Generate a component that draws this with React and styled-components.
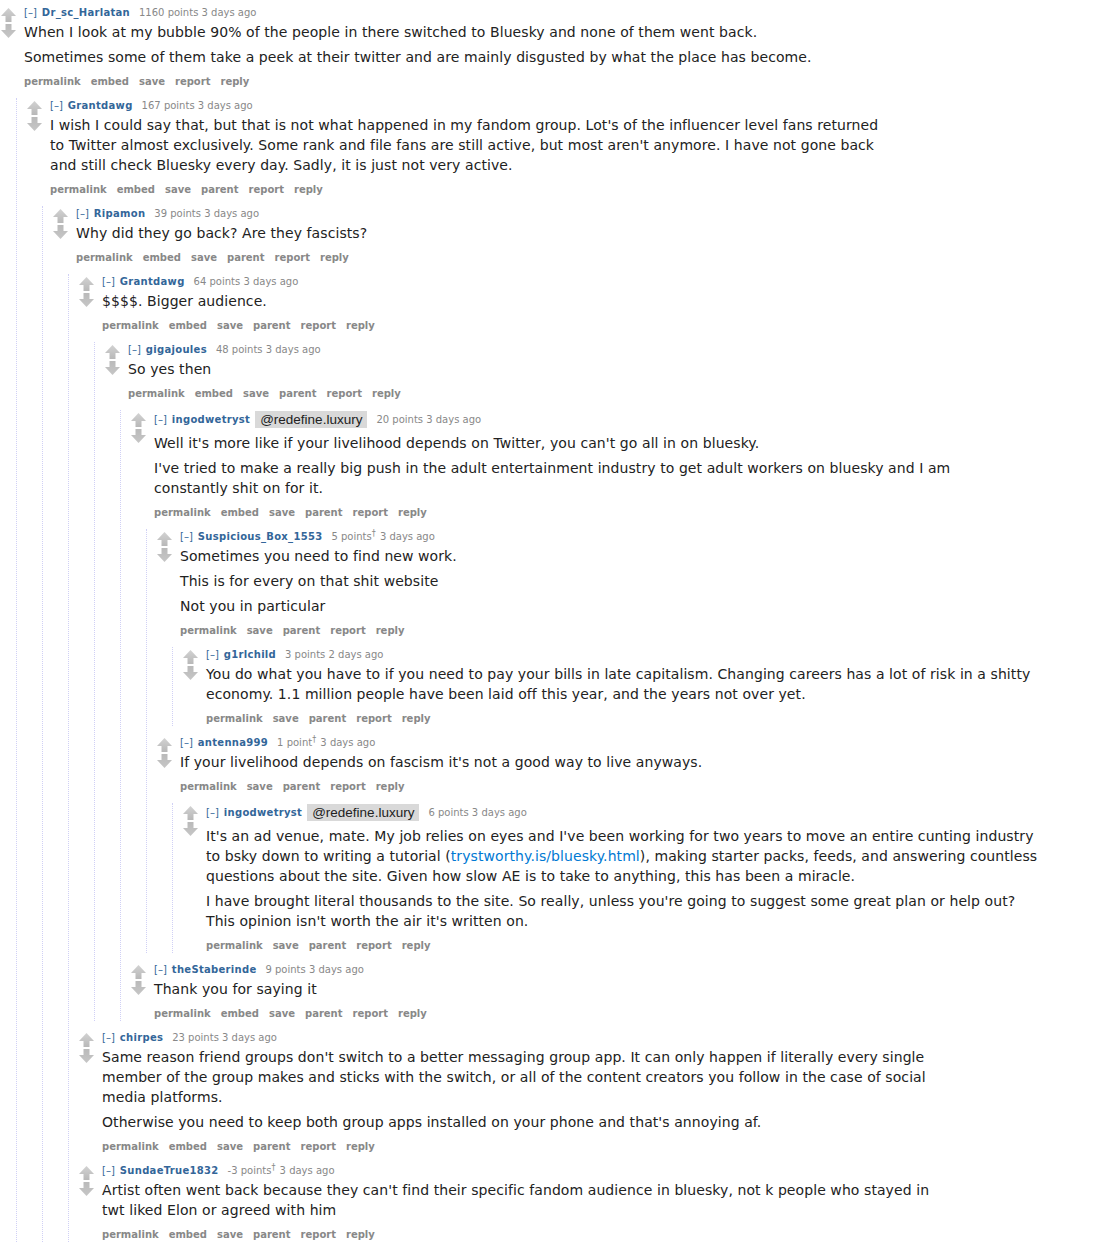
import React from "react";
import styled, { createGlobalStyle } from "styled-components";

const GlobalStyle = createGlobalStyle`
  html, body { margin: 0; padding: 0; background: #ffffff; }
  body { font-family: "DejaVu Sans", Verdana, sans-serif; color: #222222; }
`;

const Page = styled.div`
  padding: 5px 0 0 1px;
  width: 1110px;
  box-sizing: border-box;
`;

const CommentBox = styled.div`
  margin-top: ${(p) => (p.$root ? "0" : "9px")};
  margin-left: ${(p) => (p.$root ? "0" : "10px")};
`;

const Row = styled.div`
  display: flex;
  align-items: flex-start;
`;

const Midcol = styled.div`
  width: 15px;
  flex: 0 0 15px;
  margin-right: 8px;
  display: flex;
  flex-direction: column;
  gap: 2px;
  padding-top: 3px;
`;

const Entry = styled.div`
  flex: 1;
  min-width: 0;
`;

const Tagline = styled.div`
  display: flex;
  align-items: center;
  padding: 1px 0 ${(p) => (p.$flair ? "3px" : "0")} 0;
  font-size: 10px;
  line-height: 14px;
  color: #888888;
  white-space: nowrap;
`;

const Expand = styled.span`
  color: #336699;
  margin-right: 5px;
`;

const Author = styled.span`
  color: #336699;
  font-weight: bold;
  letter-spacing: 0.3px;
  margin-right: 9px;
`;

const Flair = styled.span`
  display: inline-block;
  font-family: "Liberation Sans", Arial, sans-serif;
  font-size: 13.5px;
  line-height: 17px;
  padding: 0 5px;
  margin: 0 9px 0 -4px;
  background: #d9d9d9;
  color: #222222;
`;

const Meta = styled.span`
  color: #888888;
`;

const Dagger = styled.sup`
  font-size: 8px;
  line-height: 0;
  vertical-align: super;
  margin-right: 1px;
`;

const Body = styled.div`
  margin-top: 2px;
  max-width: 840px;
  font-size: 14px;
  line-height: 20px;
  letter-spacing: 0.08px;
  color: #222222;
`;

const Para = styled.p`
  margin: 0 0 5px 0;
`;

const Link = styled.a`
  color: #0079d3;
  text-decoration: none;
`;

const Buttons = styled.ul`
  list-style: none;
  margin: 8px 0 0 0;
  padding: 0;
  display: flex;
  gap: 10px;
  font-size: 10px;
  line-height: 14px;
  font-weight: bold;
  color: #888888;
`;

const Children = styled.div`
  margin-left: 15px;
  border-left: 1px dotted #d0d0f5;
`;

function Arrow({ down }) {
  const id = down ? "gd" : "gu";
  return (
    <svg width="15" height="14" viewBox="0 0 15 14" style={{ display: "block" }}>
      <defs>
        <linearGradient id={id} x1="0" y1="0" x2="0" y2="1">
          <stop offset="0" stopColor={down ? "#bababa" : "#d2d2d2"} />
          <stop offset="1" stopColor={down ? "#c6c6c6" : "#b8b8b8"} />
        </linearGradient>
      </defs>
      {down ? (
        <path d="M4.5 0 H10.5 V6 H15 L7.5 14 L0 6 H4.5 Z" fill={`url(#${id})`} />
      ) : (
        <path d="M7.5 0 L15 8 H10.5 V14 H4.5 V8 H0 Z" fill={`url(#${id})`} />
      )}
    </svg>
  );
}

const data = {
  author: "Dr_sc_Harlatan",
  points: "1160 points",
  time: "3 days ago",
  buttons: ["permalink", "embed", "save", "report", "reply"],
  body: [
    "When I look at my bubble 90% of the people in there switched to Bluesky and none of them went back.",
    "Sometimes some of them take a peek at their twitter and are mainly disgusted by what the place has become.",
  ],
  children: [
    {
      author: "Grantdawg",
      points: "167 points",
      time: "3 days ago",
      body: [
        "I wish I could say that, but that is not what happened in my fandom group. Lot's of the influencer level fans returned to Twitter almost exclusively. Some rank and file fans are still active, but most aren't anymore. I have not gone back and still check Bluesky every day. Sadly, it is just not very active.",
      ],
      children: [
        {
          author: "Ripamon",
          points: "39 points",
          time: "3 days ago",
          body: ["Why did they go back? Are they fascists?"],
          children: [
            {
              author: "Grantdawg",
              points: "64 points",
              time: "3 days ago",
              body: ["$$$$. Bigger audience."],
              children: [
                {
                  author: "gigajoules",
                  points: "48 points",
                  time: "3 days ago",
                  body: ["So yes then"],
                  children: [
                    {
                      author: "ingodwetryst",
                      flair: "@redefine.luxury",
                      points: "20 points",
                      time: "3 days ago",
                      body: [
                        "Well it's more like if your livelihood depends on Twitter, you can't go all in on bluesky.",
                        "I've tried to make a really big push in the adult entertainment industry to get adult workers on bluesky and I am constantly shit on for it.",
                      ],
                      children: [
                        {
                          author: "Suspicious_Box_1553",
                          points: "5 points",
                          dagger: true,
                          time: "3 days ago",
                          noEmbed: true,
                          body: [
                            "Sometimes you need to find new work.",
                            "This is for every on that shit website",
                            "Not you in particular",
                          ],
                          children: [
                            {
                              author: "g1rlchild",
                              points: "3 points",
                              time: "2 days ago",
                              noEmbed: true,
                              body: [
                                "You do what you have to if you need to pay your bills in late capitalism. Changing careers has a lot of risk in a shitty economy. 1.1 million people have been laid off this year, and the years not over yet.",
                              ],
                            },
                          ],
                        },
                        {
                          author: "antenna999",
                          points: "1 point",
                          dagger: true,
                          time: "3 days ago",
                          noEmbed: true,
                          body: [
                            "If your livelihood depends on fascism it's not a good way to live anyways.",
                          ],
                          children: [
                            {
                              author: "ingodwetryst",
                              flair: "@redefine.luxury",
                              points: "6 points",
                              time: "3 days ago",
                              noEmbed: true,
                              body: [
                                [
                                  "It's an ad venue, mate. My job relies on eyes and I've been working for two years to move an entire cunting industry to bsky down to writing a tutorial (",
                                  { link: "trystworthy.is/bluesky.html" },
                                  "), making starter packs, feeds, and answering countless questions about the site. Given how slow AE is to take to anything, this has been a miracle.",
                                ],
                                "I have brought literal thousands to the site. So really, unless you're going to suggest some great plan or help out? This opinion isn't worth the air it's written on.",
                              ],
                            },
                          ],
                        },
                      ],
                    },
                    {
                      author: "theStaberinde",
                      points: "9 points",
                      time: "3 days ago",
                      body: ["Thank you for saying it"],
                    },
                  ],
                },
              ],
            },
            {
              author: "chirpes",
              points: "23 points",
              time: "3 days ago",
              body: [
                "Same reason friend groups don't switch to a better messaging group app. It can only happen if literally every single member of the group makes and sticks with the switch, or all of the content creators you follow in the case of social media platforms.",
                "Otherwise you need to keep both group apps installed on your phone and that's annoying af.",
              ],
            },
            {
              author: "SundaeTrue1832",
              points: "-3 points",
              dagger: true,
              time: "3 days ago",
              body: [
                "Artist often went back because they can't find their specific fandom audience in bluesky, not k people who stayed in twt liked Elon or agreed with him",
              ],
            },
          ],
        },
      ],
    },
  ],
};

function ParaContent({ p }) {
  if (typeof p === "string") return p;
  return p.map((part, i) =>
    typeof part === "string" ? (
      <React.Fragment key={i}>{part}</React.Fragment>
    ) : (
      <Link key={i} href="#">
        {part.link}
      </Link>
    )
  );
}

function Comment({ c, root }) {
  const buttons =
    c.buttons ||
    (c.noEmbed
      ? ["permalink", "save", "parent", "report", "reply"]
      : ["permalink", "embed", "save", "parent", "report", "reply"]);
  return (
    <CommentBox $root={root}>
      <Row>
        <Midcol>
          <Arrow />
          <Arrow down />
        </Midcol>
        <Entry>
          <Tagline $flair={!!c.flair}>
            <Expand>[–]</Expand>
            <Author>{c.author}</Author>
            {c.flair && <Flair>{c.flair}</Flair>}
            <Meta>
              {c.points}
              {c.dagger && <Dagger>†</Dagger>} {c.time}
            </Meta>
          </Tagline>
          <Body>
            {c.body.map((p, i) => (
              <Para key={i}>
                <ParaContent p={p} />
              </Para>
            ))}
          </Body>
          <Buttons>
            {buttons.map((b) => (
              <li key={b}>{b}</li>
            ))}
          </Buttons>
        </Entry>
      </Row>
      {c.children && (
        <Children>
          {c.children.map((ch, i) => (
            <Comment key={i} c={ch} />
          ))}
        </Children>
      )}
    </CommentBox>
  );
}

export default function App() {
  return (
    <>
      <GlobalStyle />
      <Page>
        <Comment c={data} root />
      </Page>
    </>
  );
}
